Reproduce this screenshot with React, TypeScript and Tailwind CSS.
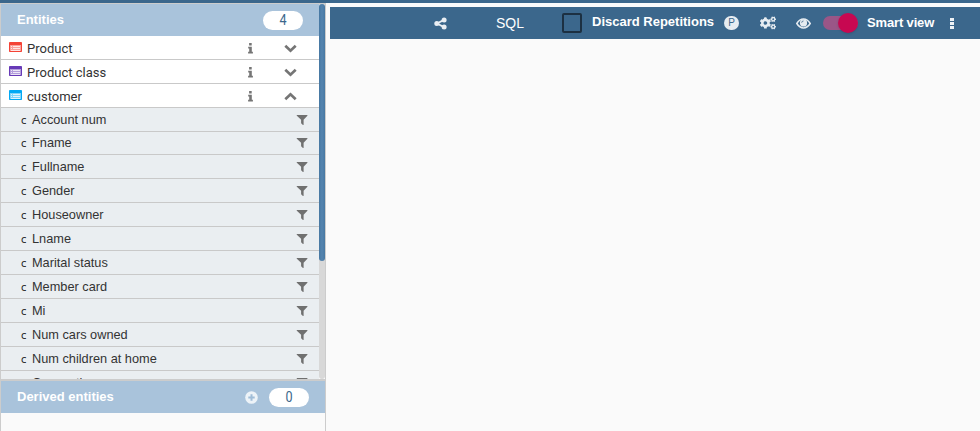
import React from "react";
import { FaCogs } from "react-icons/fa";

const entities = [
  { name: "Product", color: "#f44336", open: false },
  { name: "Product class", color: "#673ab7", open: false },
  { name: "customer", color: "#03a9f4", open: true },
];

const attributes = [
  "Account num",
  "Fname",
  "Fullname",
  "Gender",
  "Houseowner",
  "Lname",
  "Marital status",
  "Member card",
  "Mi",
  "Num cars owned",
  "Num children at home",
  "Occupation",
];

function TableIcon({ color }: { color: string }) {
  return (
    <svg width="13" height="10" viewBox="0 0 13 10" fill="none">
      <rect width="13" height="10" rx=".8" fill={color} />
      <rect x="1" y="3" width="11" height="6" fill="#fff" fillOpacity=".5" />
      <path d="M2 4.5h1M2 6.5h1M4 4.5h7M4 6.5h7M2 8.5h9" stroke="#fff" strokeOpacity=".75" />
    </svg>
  );
}

function InfoIcon() {
  return (
    <svg width="5" height="11" viewBox="0 0 5 11" fill="#757575">
      <path d="M1.1 0h2.6v2.400H1.100zM.2 3.800h3.600v5h1.100v1.800H.1V8.800h1.100V5.500H.2z" />
    </svg>
  );
}

function Chevron({ up }: { up: boolean }) {
  return (
    <svg width="13" height="9" viewBox="0 0 13 9" fill="none" className={up ? "rotate-180" : ""}>
      <path d="M1.3 1.7 6.5 6.7l5.2-5" stroke="#757575" strokeWidth="2.7" />
    </svg>
  );
}

function FilterIcon() {
  return (
    <svg width="12" height="12" viewBox="0 0 12 12" fill="#707070">
      <path d="M.9 1h10.3q.5.3.2.8L7.6 5.7v5q-.2.5-.7.2L5.1 9.3V5.7L.8 1.8Q.5 1.2.9 1Z" />
    </svg>
  );
}

function ShareIcon() {
  return (
    <svg width="13" height="13" viewBox="0 0 13 13" fill="#e9eef3">
      <path d="m3 6.5 7-3.6M3 6.5l7 3.6" stroke="#e9eef3" strokeWidth="1.8" />
      <circle cx="2.8" cy="6.5" r="2.5" />
      <circle cx="10.1" cy="3" r="2.5" />
      <circle cx="10.1" cy="10" r="2.5" />
    </svg>
  );
}

function EyeIcon() {
  return (
    <svg width="15" height="11" viewBox="0 0 15 11" fill="none" stroke="#e6ecf1">
      <path d="M.8 5.5Q3.5 1.100 7.500 1.100t6.700 4.400Q11.500 9.900 7.500 9.900T.8 5.500Z" strokeWidth="1.500" />
      <circle cx="7.500" cy="4.900" r="3.600" fill="#e6ecf1" stroke="none" />
      <path d="M5.700 4.700q0-1.700 1.800-1.700" stroke="#3b678c" strokeWidth=".8" />
    </svg>
  );
}

function Count({ value }: { value: number }) {
  return (
    <span className="flex h-[19px] w-10 items-center justify-center rounded-full bg-white font-['Roboto',sans-serif] text-[14px] leading-none text-[#3b678c]">
      <span className="scale-x-90">{value}</span>
    </span>
  );
}

function Sidebar() {
  return (
    <aside className="flex w-[326px] shrink-0 flex-col border-x border-t border-[#ccc]">
      <div className="flex h-[375px] overflow-hidden">
        <div className="w-[318px] shrink-0 overflow-hidden">
          <header className="flex h-8 items-center justify-between bg-[#a9c3db] pl-4 pr-4">
            <h2 className="text-[13px] font-bold leading-4 text-white">Entities</h2>
            <Count value={4} />
          </header>
          {entities.map((e) => (
            <div key={e.name} className="flex h-6 items-center border-b border-[#c9c9c9] bg-white pl-2">
              <span className="mb-[2px]">
                <TableIcon color={e.color} />
              </span>
              <span className="ml-[5px] mt-[2px] flex-1 font-['Roboto',sans-serif] text-[13px] leading-5 text-[#333]">
                {e.name}
              </span>
              <span className="mr-[31px] mt-px">
                <InfoIcon />
              </span>
              <span className="mr-[22px] mt-[2px]">
                <Chevron up={e.open} />
              </span>
            </div>
          ))}
          {attributes.map((name, i) => (
            <div
              key={name}
              className={`flex items-center border-b border-[#c9c9c9] bg-[#eaeef1] pl-5 pr-[11px] ${i === 1 ? "h-[23px]" : "h-6"}`}
            >
              <span className="w-[11px] pt-[2px] font-['DejaVu_Sans',sans-serif] text-[10px] leading-4 text-[#222]">c</span>
              <span className={`flex-1 text-[12.75px] leading-5 text-[#333] ${i === 1 ? "pb-px" : ""}`}>{name}</span>
              <span className={i === 1 ? "" : "mt-px"}>
                <FilterIcon />
              </span>
            </div>
          ))}
        </div>
        <div className="h-full w-1.5 rounded-b bg-[#d8d8d8]">
          <div className="h-[257px] rounded bg-gradient-to-r from-[#4778a2] via-[#5484af] to-[#4778a2]" />
        </div>
      </div>
      <section className="flex-1 border-t-2 border-[#ccc]">
        <header className="flex h-8 items-center bg-[#a9c3db] pl-4 pr-4">
          <h2 className="flex-1 text-[13px] font-bold leading-4 text-white">Derived entities</h2>
          <svg width="13" height="13" viewBox="0 0 13 13" className="mr-[11px]">
            <circle cx="6.5" cy="6.5" r="6.3" fill="#edf3f8" />
            <path d="M6.5 3.300v6.400M3.300 6.500h6.400" stroke="#a0bdd7" strokeWidth="2" />
          </svg>
          <Count value={0} />
        </header>
      </section>
    </aside>
  );
}

function Toolbar() {
  return (
    <div className="mt-1 flex h-8 items-center bg-[#3b678c] pl-[104px] text-white">
      <ShareIcon />
      <span className="ml-[49px] w-[66px] text-[14px] leading-5">SQL</span>
      <span className="h-5 w-5 rounded-[2px] border-2 border-[#1c3042]" />
      <span className="ml-[10px] w-[132px] pb-[3px] text-[13px] font-bold leading-5">Discard Repetitions</span>
      <span className="flex h-[14px] w-[15px] items-center justify-center rounded-full bg-[#e6ecf1] text-[10px] leading-none text-[#3b678c]">
        P
      </span>
      <FaCogs size={16} color="#e6ecf1" className="ml-[21px]" />
      <span className="ml-[20px]">
        <EyeIcon />
      </span>
      <span className="ml-3 flex h-[14px] w-[35px] items-center justify-end rounded-full bg-[#9a5687]">
        <span className="h-5 w-5 shrink-0 rounded-full bg-[#c70851] shadow" />
      </span>
      <span className="ml-[9px] w-[83px] pb-px text-[13px] font-bold leading-5 tracking-[-.15px]">Smart view</span>
      <svg width="4" height="11" viewBox="0 0 4 11" fill="#edf1f5">
        <path d="M0 0h4v3H0zM0 4h4v3H0zM0 8h4v3H0z" />
      </svg>
    </div>
  );
}

export default function App() {
  return (
    <div className="flex h-[431px] w-[980px] flex-col overflow-hidden bg-[#fafafa] font-['Liberation_Sans',Arial,sans-serif]">
      <div className="h-[3px] shrink-0 bg-[#3b678c]" />
      <div className="flex min-h-0 flex-1">
        <Sidebar />
        <main className="ml-1 flex-1">
          <Toolbar />
        </main>
      </div>
    </div>
  );
}
